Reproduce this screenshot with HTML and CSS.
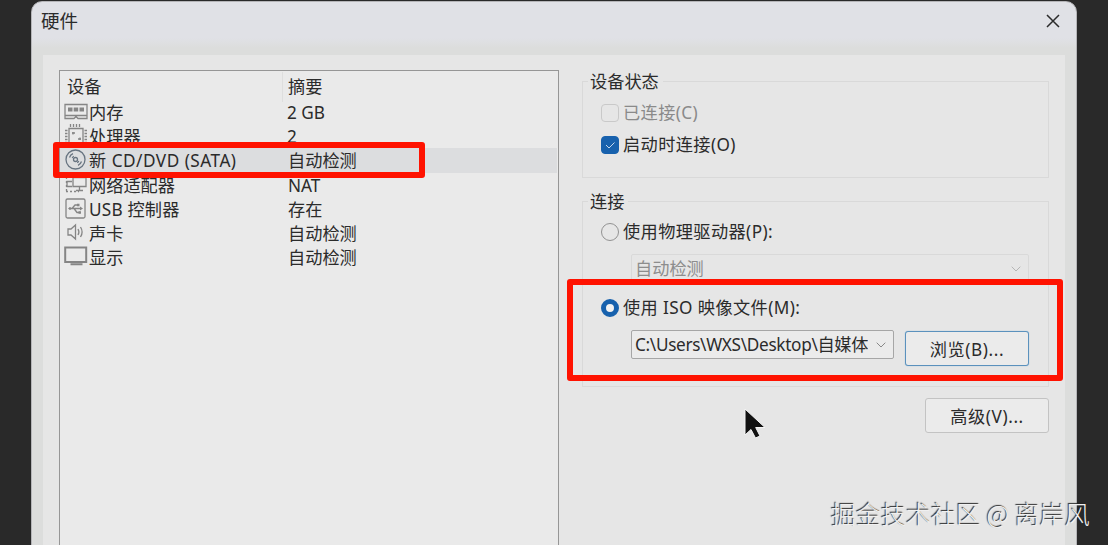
FILE: index.html
```html
<!DOCTYPE html>
<html lang="zh-CN">
<head>
  <meta charset="UTF-8">
  <meta name="viewport" content="width=device-width, initial-scale=1.0">
  <title>硬件</title>
  <link rel="stylesheet" href="styles.css">
</head>
<body>
  <main class="dialog">
    <header class="titlebar">
      <h1>硬件</h1>
      <svg class="close" viewBox="0 0 14 14"><path d="M1 1l12 12M13 1L1 13"/></svg>
    </header>

    <div class="panel">
      <div class="device-list">
        <div class="list-head"><span>设备</span><span>摘要</span></div>
        <div class="row">
          <svg class="icon" viewBox="0 0 24 24"><path d="M1 4.500h22v14h-9l-2-2-2 2H1zM1 15.500h22"/><path class="solid" d="M4 7.500h4.500v4H4zM9.700 7.500h4.500v4H9.700zM15.500 7.500H20v4h-4.500z"/></svg>
          <span class="name">内存</span><span class="latin">2 GB</span>
        </div>
        <div class="row">
          <svg class="icon" viewBox="0 0 24 24"><path d="M5 4.500h14v15H5z"/><path d="M6.500 0v3M9.500 0v3M12.500 0v3M15.500 0v3M6.500 21v3M9.500 21v3M12.500 21v3M15.500 21v3M1 6.500h2.500M1 9.500h2.500M1 12.500h2.500M1 15.500h2.500M1 18.500h2.500M20.500 6.500H23M20.500 9.500H23M20.500 12.500H23M20.500 15.500H23M20.500 18.500H23M8 9h3M9 8v2.500M14 15h3M16 13.500V16"/></svg>
          <span class="name">处理器</span><span class="latin">2</span>
        </div>
        <div class="row selected">
          <svg class="icon disc" viewBox="0 0 24 24"><circle cx="11.500" cy="11.500" r="9.500"/><circle cx="11.500" cy="11.500" r="2"/><path d="M5.500 9.500q1-2.800 3.500-3.800M8.300 10q.4-1.200 1.500-1.800M17.500 13.500q-1 2.800-3.500 3.800M14.700 13q-.4 1.200-1.500 1.800"/></svg>
          <span class="name wide">新 CD/DVD (SATA)</span><span>自动检测</span>
        </div>
        <div class="row">
          <svg class="icon" viewBox="0 0 24 24"><path d="M9 4.500h13v9H9zM15.500 14v3M12 17.500h7"/><path d="M8 8.500H3v5h5"/><path class="dotted" d="M2.500 4v14M2 18.500h13"/></svg>
          <span class="name">网络适配器</span><span>NAT</span>
        </div>
        <div class="row">
          <svg class="icon" viewBox="0 0 24 24"><rect x="2" y="2" width="19" height="19" rx="1.500"/><path d="M5 11.500h12M8 11.500l3-3.500h3M10 11.500l3 4h3"/><path class="solid" d="M16 9.500l3 2-3 2zM4 11.500l2-1.500 2 1.500L6 13zM13 6.800h2.500v2.500H13zM14.500 14.300H17v2.500h-2.500z"/></svg>
          <span class="name usb">USB 控制器</span><span>存在</span>
        </div>
        <div class="row">
          <svg class="icon" viewBox="0 0 24 24"><path d="M4 8h3l4.500-4v14L7 14H4zM14 8q1.800 3 0 6M16.500 6q3.200 5 0 10"/></svg>
          <span class="name">声卡</span><span>自动检测</span>
        </div>
        <div class="row">
          <svg class="icon display" viewBox="0 0 24 24"><path d="M1.200 2.500h21v14.500h-21zM6.500 19.300h12"/></svg>
          <span class="name">显示</span><span>自动检测</span>
        </div>
      </div>

      <div class="settings">
        <fieldset class="status">
          <legend>设备状态</legend>
          <label class="option disabled"><i class="box"></i><span>已连接(C)</span></label>
          <label class="option">
            <i class="box checked"><svg viewBox="0 0 16 16"><path d="M4 8l3 3 5.500-5.500"/></svg></i>
            <span>启动时连接(O)</span>
          </label>
        </fieldset>

        <fieldset class="connection">
          <legend>连接</legend>
          <label class="option"><i class="radio"></i><span>使用物理驱动器(P):</span></label>
          <div class="combo drive">
            <span>自动检测</span>
            <svg class="arrow" viewBox="0 0 10 6"><path d="M.7.7L5 5 9.300.7"/></svg>
          </div>
          <label class="option iso"><i class="radio on"></i><span>使用 ISO 映像文件(M):</span></label>
          <div class="file-row">
            <div class="combo file">
              <span>C:\Users\WXS\Desktop\自媒体</span>
              <svg class="arrow" viewBox="0 0 10 6"><path d="M.7.7L5 5 9.300.7"/></svg>
            </div>
            <button class="focused">浏览(B)...</button>
          </div>
        </fieldset>

        <button class="advanced">高级(V)...</button>
      </div>
    </div>
  </main>

  <div class="mark mark-device"></div>
  <div class="mark mark-iso"></div>
  <svg class="cursor" viewBox="0 0 26 38"><path d="M3 3v26l6-5.500 4.500 8.500 4.500-2-4.300-8.500H23z"/></svg>
  <div class="watermark">掘金技术社区 @ 离岸风</div>
</body>
</html>
```

FILE: styles.css
```css
* {
  margin: 0;
  padding: 0;
  box-sizing: border-box;
}

:root {
  --face: #e6e6e6;
  --text: #2b2b2b;
  --line: #d9d9d9;
  --blue: #1761ad;
  --red: #ff1200;
}

body {
  width: 1108px;
  height: 545px;
  overflow: hidden;
  position: relative;
  padding: 1px 0 0 31px;
  background: #292929;
  color: var(--text);
  font-family: "Noto Sans", "Noto Sans CJK SC", sans-serif;
  font-size: 17.2px;
  line-height: 24px;
  white-space: nowrap;
}

svg {
  display: block;
  fill: none;
  stroke: currentColor;
}

.dialog {
  width: 1046px;
  height: 560px;
  padding: 0 12px 0 11px;
  border: 1px solid #b5b5b8;
  border-radius: 11px;
  background: linear-gradient(#e0e1e6 0, #e0e1e6 36px, #dcdddc 46px);
}

.titlebar {
  height: 53px;
  display: flex;
  justify-content: space-between;
  padding: 7px 4px 0 0;
}

.titlebar h1 {
  font-size: 18.5px;
  font-weight: 400;
  margin-left: -2px;
}

.close {
  width: 14px;
  height: 14px;
  margin-top: 5px;
  stroke-width: 1.5;
}

.panel {
  display: flex;
  gap: 23px;
  width: 1022px;
  height: 500px;
  padding: 15px 15px 0 16px;
  background: var(--face);
}

.device-list {
  width: 500px;
  height: 490px;
  border: 1px solid #969696;
  background: #eaeaea;
  padding-top: 1px;
}

.list-head,
.row {
  display: grid;
  grid-template-columns: 227px 1fr;
}

.list-head {
  height: 28px;
  line-height: 30px;
  padding-left: 7px;
  grid-template-columns: 215px 1fr;
}

.list-head span + span {
  border-left: 1px solid #dedede;
  padding-left: 5px;
}

.row {
  grid-template-columns: 25px 198px 1fr;
  height: 24.200px;
  line-height: 25.500px;
  padding-left: 4px;
  margin-right: 1px;
}

.row span:last-child {
  padding-left: 1px;
}

.row .latin:last-child {
  padding-left: 0;
}

.wide {
  letter-spacing: .5px;
}

.usb {
  letter-spacing: .2px;
}

.selected {
  background: #dcdddf;
}

.icon {
  width: 24px;
  height: 24px;
  color: #858585;
  stroke-width: 1.3;
}

.disc {
  color: #687481;
}

.display {
  stroke-width: 2;
}

.dotted {
  stroke-dasharray: 2 2;
}

.solid {
  fill: currentColor;
  stroke: none;
}

.settings {
  width: 467px;
  display: flex;
  flex-direction: column;
}

fieldset {
  border: 1px solid var(--line);
}

legend {
  height: 22px;
  line-height: 23px;
  margin-left: 5px;
  padding: 0 4px 0 2px;
}

.status {
  height: 108px;
}

.connection {
  height: 197px;
  margin-top: 12px;
}

.option {
  display: flex;
  align-items: center;
  gap: 4px;
  height: 24px;
  line-height: 26px;
  margin-left: 18px;
  letter-spacing: .4px;
}

.status .option {
  margin-top: 8px;
}

.status .disabled {
  color: #8a8a8a;
  margin-top: 9px;
}

.box,
.radio {
  flex: none;
  width: 18px;
  height: 18px;
  border: 1px solid #929292;
  border-radius: 4px;
}

.disabled .box {
  border-color: #c9c9c9;
}

.box.checked {
  color: #c5d8ec;
  background: var(--blue);
  border-color: var(--blue);
}

.radio {
  border-radius: 50%;
}

.radio.on {
  border: 5px solid var(--blue);
  background: #f2f2f2;
}

.connection .option {
  margin-top: 8px;
}

.combo {
  display: flex;
  align-items: center;
  justify-content: space-between;
  border: 1px solid #a6a6a6;
  border-radius: 2px;
  height: 29px;
  line-height: 29px;
  padding: 0 7px 0 3px;
}

.arrow {
  flex: none;
  width: 10px;
  height: 6px;
  color: #888;
}

.drive {
  width: 398px;
  margin: 10px 0 0 48px;
  color: #8d8d8d;
  border-color: var(--line);
}

.drive .arrow {
  color: #b5b5b5;
}

.connection .iso {
  margin-top: 13px;
}

.file-row {
  display: flex;
  gap: 11px;
  margin: 10px 0 0 48px;
}

.file {
  width: 263px;
  background: #ebebeb;
}

.file span {
  width: 233px;
  overflow: hidden;
  letter-spacing: -.32px;
}

button {
  width: 124px;
  height: 35px;
  padding-top: 2px;
  border: 1px solid #c3c3c3;
  border-radius: 3px;
  background: #ebebeb;
  color: var(--text);
  font: inherit;
  letter-spacing: .6px;
}

.focused {
  margin-top: 1px;
  border-color: #5b91bd;
  box-shadow: 0 0 1px #73aad2;
}

.advanced {
  align-self: flex-end;
  margin-top: 11px;
}

/* highlight frames over the dialog */
.mark {
  position: absolute;
  border: 6px solid var(--red);
  border-radius: 3px;
}

.mark-device {
  left: 53px;
  top: 142px;
  width: 372px;
  height: 36px;
}

.mark-iso {
  left: 567px;
  top: 279px;
  width: 496px;
  height: 102px;
}

.cursor {
  position: absolute;
  left: 742px;
  top: 406px;
  width: 26px;
  height: 38px;
  fill: #111;
  stroke: #f5f5f5;
  stroke-width: 1;
}

.watermark {
  position: absolute;
  left: 831px;
  top: 496px;
  color: #f0f0f0;
  font-family: "Noto Sans CJK SC", sans-serif;
  font-size: 25px;
  font-weight: 300;
  line-height: 34px;
  text-shadow: -1px -1px 1px #222;
}
```
